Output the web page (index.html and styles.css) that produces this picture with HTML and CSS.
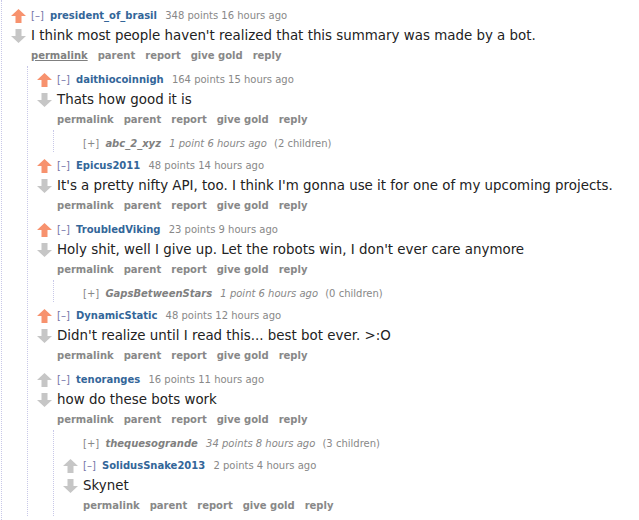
FILE: index.html
```html
<!DOCTYPE html>
<html>
<head>
<meta charset="utf-8">
<link rel="stylesheet" href="styles.css">
</head>
<body>
<svg width="0" height="0" class="defs">
  <defs>
    <symbol id="up" viewBox="0 0 15 14"><path d="M7.5 0 L15 7 L10.5 7 L10.5 14 L4.5 14 L4.5 7 L0 7 Z"/></symbol>
    <symbol id="down" viewBox="0 0 15 14"><path d="M7.5 14 L15 7 L10.5 7 L10.5 0 L4.5 0 L4.5 7 L0 7 Z"/></symbol>
  </defs>
</svg>
<div class="sitetable">
  <div class="comment">
    <div class="midcol">
      <svg class="arrow up upmod"><use href="#up"/></svg>
      <svg class="arrow down"><use href="#down"/></svg>
    </div>
    <div class="entry">
      <p class="tagline"><span class="expand">[–]</span> <span class="author">president_of_brasil</span> <span class="score">348 points 16 hours ago</span></p>
      <p class="md">I think most people haven't realized that this summary was made by a bot.</p>
      <ul class="buttons"><li class="hover">permalink</li><li>parent</li><li>report</li><li>give gold</li><li>reply</li></ul>
    </div>
    <div class="child">
      <div class="comment">
        <div class="midcol">
          <svg class="arrow up upmod"><use href="#up"/></svg>
          <svg class="arrow down"><use href="#down"/></svg>
        </div>
        <div class="entry">
          <p class="tagline"><span class="expand">[–]</span> <span class="author">daithiocoinnigh</span> <span class="score">164 points 15 hours ago</span></p>
          <p class="md">Thats how good it is</p>
          <ul class="buttons"><li>permalink</li><li>parent</li><li>report</li><li>give gold</li><li>reply</li></ul>
        </div>
        <div class="child">
          <div class="comment collapsed">
            <div class="midcol"></div>
            <div class="entry">
              <p class="tagline"><span class="expand">[+]</span> <span class="author">abc_2_xyz</span> <span class="score">1 point 6 hours ago</span> <span class="numchildren">(2 children)</span></p>
            </div>
          </div>
        </div>
      </div>

      <div class="comment">
        <div class="midcol">
          <svg class="arrow up upmod"><use href="#up"/></svg>
          <svg class="arrow down"><use href="#down"/></svg>
        </div>
        <div class="entry">
          <p class="tagline"><span class="expand">[–]</span> <span class="author">Epicus2011</span> <span class="score">48 points 14 hours ago</span></p>
          <p class="md">It's a pretty nifty API, too. I think I'm gonna use it for one of my upcoming projects.</p>
          <ul class="buttons"><li>permalink</li><li>parent</li><li>report</li><li>give gold</li><li>reply</li></ul>
        </div>
      </div>

      <div class="comment">
        <div class="midcol">
          <svg class="arrow up upmod"><use href="#up"/></svg>
          <svg class="arrow down"><use href="#down"/></svg>
        </div>
        <div class="entry">
          <p class="tagline"><span class="expand">[–]</span> <span class="author">TroubledViking</span> <span class="score">23 points 9 hours ago</span></p>
          <p class="md">Holy shit, well I give up. Let the robots win, I don't ever care anymore</p>
          <ul class="buttons"><li>permalink</li><li>parent</li><li>report</li><li>give gold</li><li>reply</li></ul>
        </div>
        <div class="child">
          <div class="comment collapsed">
            <div class="midcol"></div>
            <div class="entry">
              <p class="tagline"><span class="expand">[+]</span> <span class="author">GapsBetweenStars</span> <span class="score">1 point 6 hours ago</span> <span class="numchildren">(0 children)</span></p>
            </div>
          </div>
        </div>
      </div>

      <div class="comment">
        <div class="midcol">
          <svg class="arrow up upmod"><use href="#up"/></svg>
          <svg class="arrow down"><use href="#down"/></svg>
        </div>
        <div class="entry">
          <p class="tagline"><span class="expand">[–]</span> <span class="author">DynamicStatic</span> <span class="score">48 points 12 hours ago</span></p>
          <p class="md">Didn't realize until I read this... best bot ever. &gt;:O</p>
          <ul class="buttons"><li>permalink</li><li>parent</li><li>report</li><li>give gold</li><li>reply</li></ul>
        </div>
      </div>

      <div class="comment">
        <div class="midcol">
          <svg class="arrow up"><use href="#up"/></svg>
          <svg class="arrow down"><use href="#down"/></svg>
        </div>
        <div class="entry">
          <p class="tagline"><span class="expand">[–]</span> <span class="author">tenoranges</span> <span class="score">16 points 11 hours ago</span></p>
          <p class="md">how do these bots work</p>
          <ul class="buttons"><li>permalink</li><li>parent</li><li>report</li><li>give gold</li><li>reply</li></ul>
        </div>
        <div class="child">
          <div class="comment collapsed">
            <div class="midcol"></div>
            <div class="entry">
              <p class="tagline"><span class="expand">[+]</span> <span class="author">thequesogrande</span> <span class="score">34 points 8 hours ago</span> <span class="numchildren">(3 children)</span></p>
            </div>
          </div>
          <div class="comment">
            <div class="midcol">
              <svg class="arrow up"><use href="#up"/></svg>
              <svg class="arrow down"><use href="#down"/></svg>
            </div>
            <div class="entry">
              <p class="tagline"><span class="expand">[–]</span> <span class="author">SolidusSnake2013</span> <span class="score">2 points 4 hours ago</span></p>
              <p class="md">Skynet</p>
              <ul class="buttons"><li>permalink</li><li>parent</li><li>report</li><li>give gold</li><li>reply</li></ul>
            </div>
          </div>
        </div>
      </div>
    </div>
  </div>
</div>
</body>
</html>
```

FILE: styles.css
```css
html, body {
  margin: 0;
  padding: 0;
  background: #fff;
}
body {
  font-family: "DejaVu Sans", Verdana, sans-serif;
  color: #222;
  overflow: hidden;
}
.defs {
  position: absolute;
  width: 0;
  height: 0;
}
.sitetable {
  border-left: 1px dotted #c8c8e8;
  margin-left: 1px;
  padding-top: 2px;
  min-height: 520px;
  box-sizing: border-box;
}
.comment {
  display: grid;
  grid-template-columns: 20px 1fr;
  margin-left: 9px;
  margin-top: 4px;
}
.child .comment {
  margin-left: 9px;
}
.midcol {
  grid-column: 1;
  display: flex;
  flex-direction: column;
  align-items: flex-start;
}
.arrow {
  width: 15px;
  height: 14px;
  fill: #c6c6c6;
}
.arrow.up {
  margin-top: 3px;
}
.arrow.down {
  margin-top: 6px;
}
.arrow.upmod {
  fill: #f7926e;
}
.entry {
  grid-column: 2;
  min-width: 0;
}
.tagline {
  margin: 0;
  font-size: 10px;
  line-height: 20px;
  color: #888;
  white-space: nowrap;
}
.expand {
  color: #7474a8;
}
.author {
  color: #336699;
  font-weight: bold;
  margin: 0 5px 0 3px;
}
.md {
  margin: 0;
  font-size: 13.4px;
  line-height: 20px;
  white-space: nowrap;
}
.buttons {
  list-style: none;
  margin: 0;
  padding: 0;
  display: flex;
  gap: 10px;
  font-size: 10px;
  line-height: 20px;
  font-weight: bold;
  color: #888;
}
.buttons .hover {
  text-decoration: underline;
  color: #808080;
}
.child {
  grid-column: 1 / -1;
  margin-left: 16px;
  border-left: 1px dotted #c8c8e8;
}
.collapsed .tagline {
  font-style: italic;
  line-height: 16px;
  padding-top: 2px;
}
.collapsed .author {
  color: #808080;
}
.collapsed .expand {
  font-style: normal;
  color: #888;
}
.collapsed .numchildren {
  font-style: normal;
  margin-left: 4px;
}
```
